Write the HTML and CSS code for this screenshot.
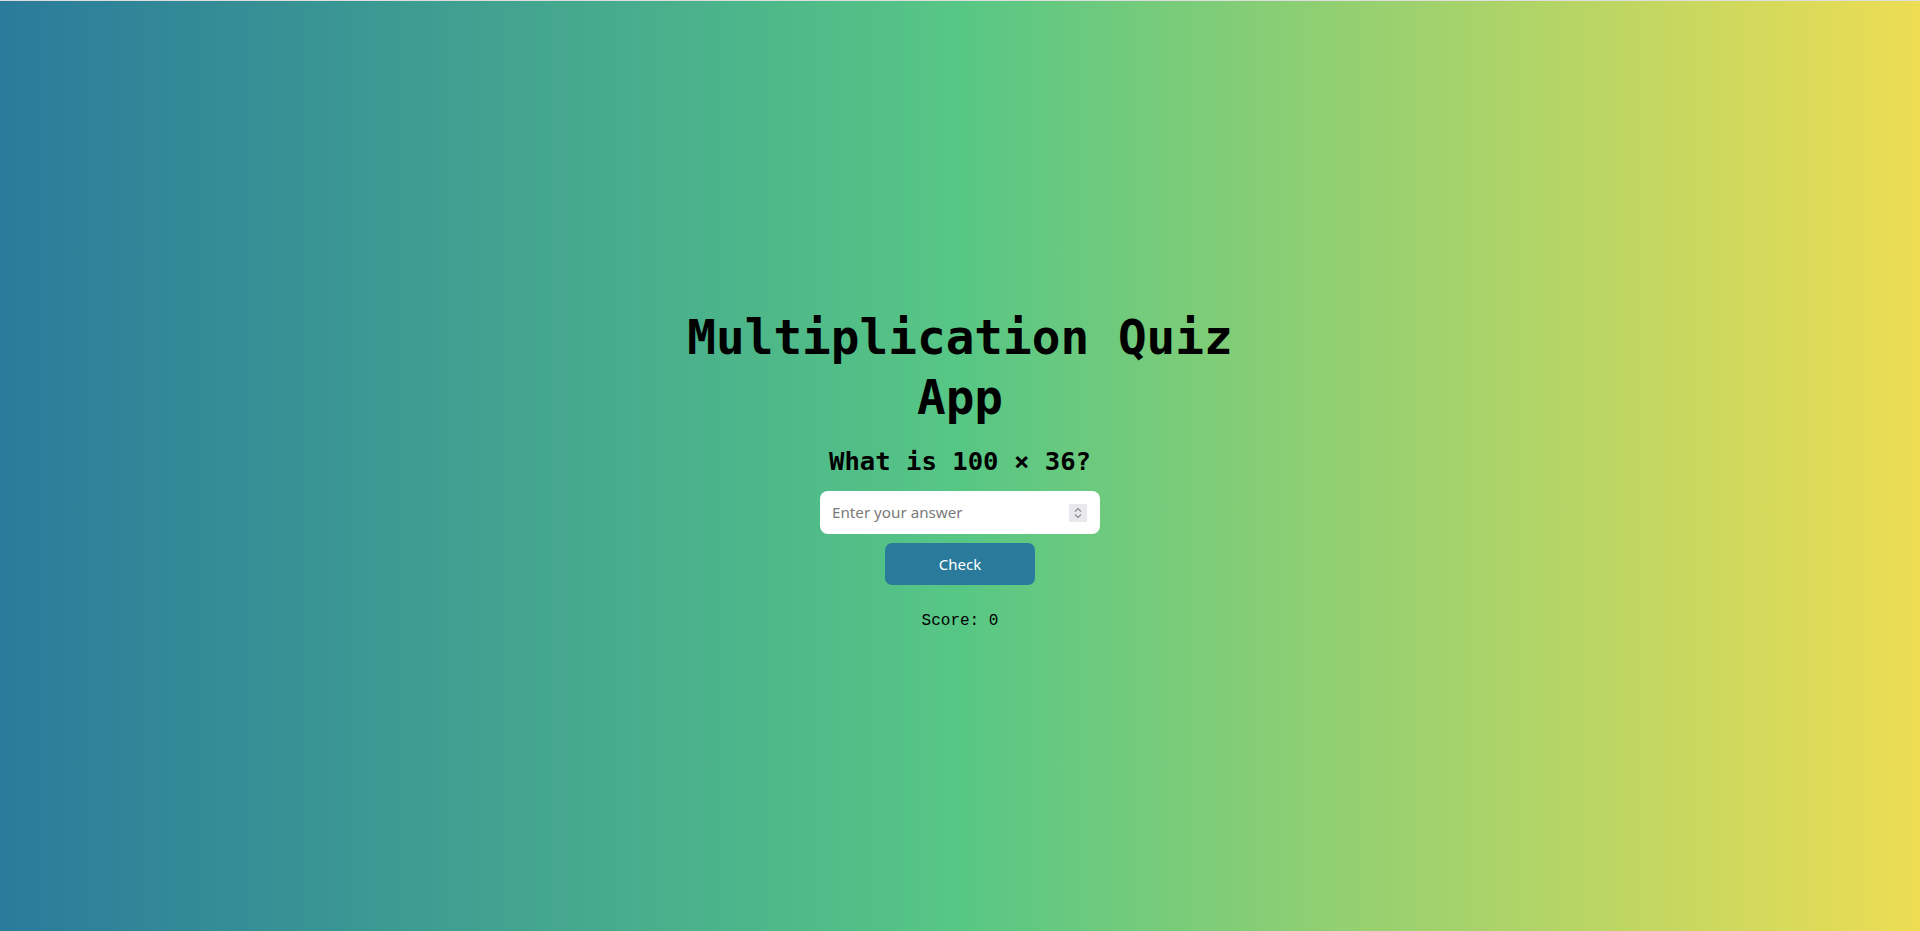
FILE: index.html
```html
<!DOCTYPE html>
<html lang="en">
<head>
<meta charset="utf-8">
<title>Multiplication Quiz App</title>
<link rel="stylesheet" href="styles.css">
</head>
<body>
<main class="quiz">
  <h1 class="quiz-title">Multiplication Quiz App</h1>
  <h2 class="quiz-question">What is 100 × 36?</h2>
  <div class="answer-field">
    <input class="answer-input" type="number" placeholder="Enter your answer">
    <span class="spinner" aria-hidden="true">
      <svg width="18" height="18" viewBox="0 0 18 18"><path d="M6 7.5 L9 4.5 L12 7.5" fill="none" stroke="#8a8a8e" stroke-width="1.1"/><path d="M6 10.5 L9 13.5 L12 10.5" fill="none" stroke="#8a8a8e" stroke-width="1.1"/></svg>
    </span>
  </div>
  <button class="check-btn" type="button">Check</button>
  <p class="score">Score: 0</p>
</main>
</body>
</html>
```

FILE: styles.css
```css
html, body {
  margin: 0;
  padding: 0;
}
body {
  height: 100vh;
  box-sizing: border-box;
  border-top: 1px solid #dedede;
  background: linear-gradient(90deg, #2a7b9b 0%, #57c785 50%, #eddd53 100%);
  font-family: "Noto Sans", sans-serif;
}
.quiz {
  height: 100%;
  display: flex;
  flex-direction: column;
  align-items: center;
  justify-content: center;
  padding-top: 5px;
  box-sizing: border-box;
}
.quiz-title {
  margin: 0 0 18px;
  width: 560px;
  text-align: center;
  font-family: "DejaVu Sans Mono", monospace;
  font-weight: bold;
  font-size: 47.7px;
  line-height: 60px;
  color: #000;
}
.quiz-question {
  margin: 0 0 15px;
  font-family: "DejaVu Sans Mono", monospace;
  font-weight: bold;
  font-size: 25.6px;
  line-height: 30px;
  color: #000;
}
.answer-field {
  position: relative;
  width: 280px;
  height: 43px;
}
.answer-input {
  width: 100%;
  height: 100%;
  box-sizing: border-box;
  border: none;
  border-radius: 8px;
  background: #fff;
  padding: 0 40px 0 12px;
  font-family: "Noto Sans", sans-serif;
  font-size: 15.2px;
  color: #333;
  outline: none;
  -moz-appearance: textfield;
}
.answer-input::placeholder {
  color: #7a7a7a;
}
.answer-input::-webkit-inner-spin-button,
.answer-input::-webkit-outer-spin-button {
  -webkit-appearance: none;
  margin: 0;
}
.spinner {
  position: absolute;
  right: 13px;
  top: 13px;
  width: 18px;
  height: 18px;
  background: #e9e9ed;
  display: flex;
}
.check-btn {
  margin-top: 9px;
  width: 150px;
  height: 42px;
  border: none;
  border-radius: 7px;
  background: #2a7b9b;
  color: #fff;
  font-family: "Noto Sans", sans-serif;
  font-size: 15px;
  cursor: pointer;
}
.score {
  margin: 27px 0 0;
  font-family: "Liberation Mono", monospace;
  font-size: 16px;
  line-height: 18px;
  color: #000;
}
```
